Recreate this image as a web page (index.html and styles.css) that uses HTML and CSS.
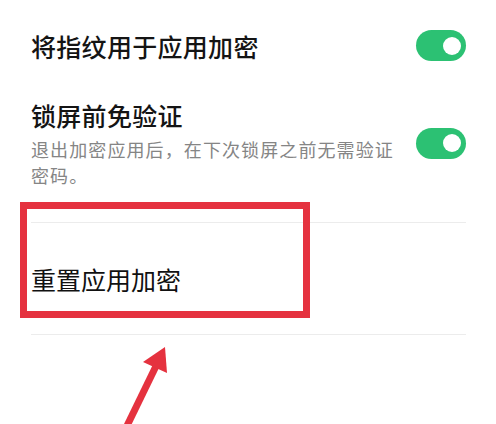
FILE: index.html
```html
<!DOCTYPE html>
<html lang="zh-CN">
<head>
<meta charset="utf-8">
<link rel="stylesheet" href="styles.css">
</head>
<body>
<div class="page">
  <div class="list">
    <div class="row row-first">
      <div class="text">
        <div class="title">将指纹用于应用加密</div>
      </div>
      <div class="toggle"><span class="knob"></span></div>
    </div>
    <div class="row row-second">
      <div class="text">
        <div class="title">锁屏前免验证</div>
        <div class="sub">退出加密应用后，在下次锁屏之前无需验证密码。</div>
      </div>
      <div class="toggle"><span class="knob"></span></div>
    </div>
    <div class="row row-third">
      <div class="text">
        <div class="title title-reset">重置应用加密</div>
      </div>
    </div>
  </div>
  <div class="highlight"></div>
  <svg class="arrow" width="496" height="424" viewBox="0 0 496 424">
    <line x1="124" y1="432" x2="158" y2="362" stroke="#e5323f" stroke-width="7"/>
    <polygon points="165,347 143,362 167,373" fill="#e5323f"/>
  </svg>
</div>
</body>
</html>
```
FILE: styles.css
```css
html, body {
  margin: 0;
  padding: 0;
  background: #ffffff;
}
body {
  font-family: "Noto Sans CJK SC", "Noto Sans", sans-serif;
  color: #141414;
}
.page {
  position: relative;
  width: 496px;
  height: 424px;
  overflow: hidden;
}
.list {
  display: flex;
  flex-direction: column;
  padding: 0 30px 0 31px;
}
.row {
  display: flex;
  align-items: center;
  justify-content: space-between;
}
.row-first {
  height: 91px;
}
.row-second {
  padding: 7px 0 34px 0;
  height: 90px;
}
.row-third {
  height: 111px;
  border-top: 1px solid #ececec;
  border-bottom: 1px solid #ececec;
}
.text {
  display: flex;
  flex-direction: column;
}
.title {
  font-size: 25px;
  font-weight: 500;
  line-height: 32px;
  letter-spacing: 0.3px;
}
.title-reset {
  font-weight: 400;
  letter-spacing: 0;
  color: #111111;
}
.sub {
  margin-top: 5px;
  width: 372px;
  font-size: 18px;
  line-height: 26px;
  letter-spacing: 1.1px;
  color: #858585;
}
.toggle {
  width: 50px;
  height: 31px;
  border-radius: 16px;
  background: #2cc173;
  display: flex;
  align-items: center;
  justify-content: flex-end;
  flex-shrink: 0;
}
.knob {
  width: 18px;
  height: 18px;
  border-radius: 50%;
  background: #ffffff;
  margin-right: 5px;
}
.highlight {
  position: absolute;
  left: 20px;
  top: 202px;
  width: 290px;
  height: 116px;
  box-sizing: border-box;
  border: 7px solid #e5323f;
}
.arrow {
  position: absolute;
  left: 0;
  top: 0;
}
```
